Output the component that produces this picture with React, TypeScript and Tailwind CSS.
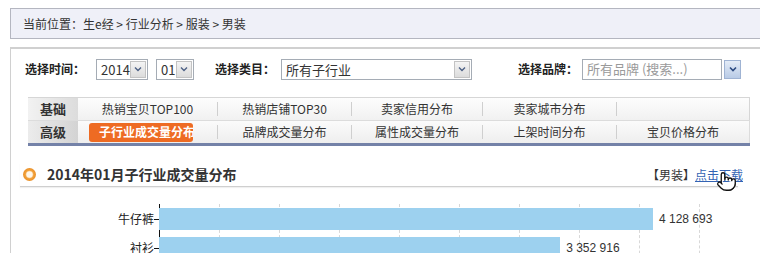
import { Pointer } from 'lucide-react';

const font = { fontFamily: '"Noto Sans CJK SC", "Liberation Sans", sans-serif' };

// Small select-like control with the old windows arrow box
function FakeSelect({ value, width }: { value: string; width: string }) {
  return (
    <div className={`flex h-[21px] items-center border border-[#a5acb5] bg-white ${width}`}>
      <span className="flex-1 pl-[4px] text-[13px] leading-none text-[#333]">{value}</span>
      <span className="mr-[1px] flex h-[17px] w-[16px] items-center justify-center border border-[#c3c3c3] bg-gradient-to-b from-[#f4f4f4] to-[#dcdcdc]">
        <svg width="8" height="6" viewBox="0 0 8 6">
          <path d="M1 1.5 L4 4.5 L7 1.5" fill="none" stroke="#4d6185" strokeWidth="1.4" />
        </svg>
      </span>
    </div>
  );
}

const row1 = ['热销宝贝TOP100', '热销店铺TOP30', '卖家信用分布', '卖家城市分布', ''];
const row2 = ['子行业成交量分布', '品牌成交量分布', '属性成交量分布', '上架时间分布', '宝贝价格分布'];

const bars = [
  { label: '牛仔裤', value: 4128693, text: '4 128 693' },
  { label: '衬衫', value: 3352916, text: '3 352 916' },
];

export default function App() {
  const max = 4128693;
  return (
    <div className="h-[253px] w-[760px] overflow-hidden bg-white text-[12px] text-[#333]" style={font}>
      {/* breadcrumb */}
      <div className="ml-[10px] mt-[8px] flex h-[31px] items-center border-y border-l border-[#b4b6c0] bg-[#eff0f8] pl-[12px] text-[12px] text-[#333]">
        当前位置：生e经 &gt; 行业分析 &gt; 服装 &gt; 男装
      </div>

      <div className="ml-[10px] mt-[8px] border-l border-t-2 border-[#d0d0d0]">
        {/* filters */}
        <div className="flex h-[40px] items-center pl-[14px]">
          <span className="font-bold text-[#222]">选择时间：</span>
          <div className="ml-[11px]"><FakeSelect value="2014" width="w-[52px]" /></div>
          <div className="ml-[8px]"><FakeSelect value="01" width="w-[38px]" /></div>
          <span className="ml-[21px] font-bold text-[#222]">选择类目：</span>
          <div className="ml-[6px]"><FakeSelect value="所有子行业" width="w-[191px]" /></div>
          <span className="ml-[46px] font-bold text-[#222]">选择品牌：</span>
          <div className="ml-[4px] flex h-[21px] w-[140px] items-center border border-[#a5acb5] bg-white pl-[4px] text-[13px] text-[#9a9a9a]">
            所有品牌 (搜索...)
          </div>
          <span className="ml-[2px] flex h-[19px] w-[17px] items-center justify-center border border-[#9fb3d3] bg-gradient-to-b from-[#e4ecf7] to-[#b9cbe6]">
            <svg width="8" height="6" viewBox="0 0 8 6">
              <path d="M1 1.5 L4 4.5 L7 1.5" fill="none" stroke="#2c4a80" strokeWidth="1.6" />
            </svg>
          </span>
        </div>

        {/* tabs */}
        <div className="ml-[17px] mt-[8px] w-[722px]">
          <div className="grid h-[23px] grid-cols-[50px_140px_134px_131px_134px_1fr] border-t border-r border-[#d6d6d6] bg-gradient-to-b from-[#fdfdfd] to-[#f1f1f1]">
            <div className="flex items-center justify-center bg-gradient-to-r from-[#f2f2f2] to-[#dcdcdc] font-bold text-[13px] text-[#333]">基础</div>
            {row1.map((t, i) => (
              <div key={i} className="flex items-center justify-center">
                <span className="flex-1 text-center text-[#333]">{t}</span>
                {i < 4 && <span className="h-[14px] w-px bg-[#cfcfcf]" />}
              </div>
            ))}
          </div>
          <div className="grid h-[23px] grid-cols-[50px_140px_134px_131px_134px_1fr] border-t border-r border-[#dcdcdc] bg-gradient-to-b from-[#fbfbfb] to-[#eeeeee]">
            <div className="flex items-center justify-center bg-gradient-to-r from-[#ececec] to-[#d3d3d3] font-bold text-[13px] text-[#333]">高级</div>
            {row2.map((t, i) => (
              <div key={i} className="flex items-center justify-center">
                {i === 0 ? (
                  <div className="flex flex-1 items-center pl-[11px]">
                    <span className="flex h-[19px] w-[104px] items-center overflow-hidden whitespace-nowrap rounded-[3px] bg-[#ee6b23] pl-[10px] font-bold text-[12px] text-white">
                      {t}
                    </span>
                  </div>
                ) : (
                  <span className="flex-1 text-center text-[#333]">{t}</span>
                )}
                {i < 4 && <span className="h-[14px] w-px bg-[#cfcfcf]" />}
              </div>
            ))}
          </div>
          <div className="h-[3px] bg-[#7482a8]" />
        </div>

        {/* section header */}
        <div className="ml-[9px] mt-[17px] flex h-[24px] w-[718px] items-center border-b border-[#cfcfcf] shadow-[0_1px_1px_rgba(0,0,0,0.06)]">
          <span className="ml-[3px] h-[13px] w-[13px] rounded-full bg-[radial-gradient(circle,#fff7ea_30%,#f2a23c_45%,#e07b10_100%)]" />
          <span className="ml-[11px] text-[14px] font-bold text-[#333]">2014年01月子行业成交量分布</span>
          <span className="ml-auto text-[12px] text-[#333]">【男装】</span>
          <span className="relative mr-[-5px] text-[12px] text-[#3363b3] underline">
            点击下载
            <Pointer className="absolute left-[21px] top-[5px]" size={21} fill="white" stroke="#111" strokeWidth={1.5} />
          </span>
        </div>

        {/* chart */}
        <div className="relative mt-[17px] h-[60px]">
          <div className="absolute left-[148px] top-0 h-full w-px bg-[#111]" />
          {[1, 2, 3, 4, 5, 6, 7, 8, 9].map((n) => (
            <div key={n} className="absolute top-0 h-full border-l border-dashed border-[#d8d8d8]" style={{ left: 148 + n * 60 }} />
          ))}
          <div className="flex flex-col gap-[7px] pt-[4px]">
            {bars.map((b) => (
              <div key={b.label} className="relative flex h-[22px] items-center">
                <span className="w-[143px] text-right text-[12px] text-[#222]">{b.label}</span>
                <span className="h-px w-[5px] bg-[#111]" />
                <div className="relative z-10 h-full bg-[#9dd1ef]" style={{ width: (b.value / max) * 494 }} />
                <span className="ml-[6px] text-[12px] text-[#333]" style={{ fontFamily: '"Liberation Sans", sans-serif' }}>{b.text}</span>
              </div>
            ))}
          </div>
        </div>
      </div>
    </div>
  );
}
